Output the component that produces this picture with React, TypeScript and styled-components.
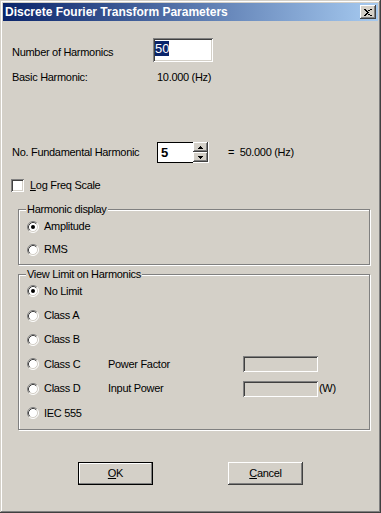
import React from 'react';
import styled, { createGlobalStyle } from 'styled-components';

const GlobalStyle = createGlobalStyle`
  html, body {
    margin: 0;
    padding: 0;
    background: #d4d0c8;
  }
  body {
    font-family: "Liberation Sans", Arial, sans-serif;
    font-size: 11px;
    letter-spacing: -0.3px;
    color: #000;
  }
`;

const Window = styled.div`
  width: 381px;
  height: 513px;
  box-sizing: border-box;
  padding: 3px;
  background: #d4d0c8;
  box-shadow: inset -1px -1px #404040, inset 1px 1px #d4d0c8, inset -2px -2px #808080,
    inset 2px 2px #ffffff;
  display: flex;
  flex-direction: column;
`;

const TitleBar = styled.div`
  height: 18px;
  flex-shrink: 0;
  display: flex;
  align-items: center;
  justify-content: space-between;
  padding: 0 2px;
  background: linear-gradient(to right, #0a246a, #a6caf0);
`;

const Title = styled.span`
  color: #fff;
  font-weight: bold;
  font-size: 12px;
  letter-spacing: 0;
  line-height: 14px;
`;

const CloseButton = styled.div`
  width: 16px;
  height: 14px;
  box-sizing: border-box;
  display: flex;
  align-items: center;
  justify-content: center;
  background: #d4d0c8;
  box-shadow: inset -1px -1px #404040, inset 1px 1px #ffffff, inset -2px -2px #808080;
`;

const Body = styled.div`
  display: flex;
  flex-direction: column;
  padding-left: 9px;
`;

const Row = styled.div<{ $mt: number; $h: number }>`
  display: flex;
  align-items: center;
  margin-top: ${(p) => p.$mt}px;
  height: ${(p) => p.$h}px;
  flex-shrink: 0;
`;

const Label = styled.span<{ $w?: number; $dy?: number; $ml?: number }>`
  line-height: 13px;
  white-space: pre;
  flex-shrink: 0;
  ${(p) => (p.$w ? `width: ${p.$w}px;` : '')}
  ${(p) => (p.$ml ? `margin-left: ${p.$ml}px;` : '')}
  ${(p) => (p.$dy ? `align-self: flex-start; padding-top: ${p.$dy}px;` : '')}
`;

const Edit = styled.div<{ $w: number; $h: number; $disabled?: boolean }>`
  width: ${(p) => p.$w}px;
  height: ${(p) => p.$h}px;
  box-sizing: border-box;
  flex-shrink: 0;
  padding: 4px 2px 0;
  background: ${(p) => (p.$disabled ? '#d4d0c8' : '#ffffff')};
  box-shadow: inset 1px 1px #808080, inset -1px -1px #ffffff, inset 2px 2px #404040,
    inset -2px -2px #d4d0c8;
  font-size: 13px;
  letter-spacing: 0;
  line-height: 13px;
`;

const Selected = styled.span`
  background: #0a246a;
  color: #fff;
`;

const SpinBox = styled.div`
  display: flex;
  height: 21px;
  width: 52px;
  flex-shrink: 0;
`;

const SpinEdit = styled.div`
  flex: 1;
  box-sizing: border-box;
  border: 1px solid #000;
  border-right: none;
  background: #fff;
  padding: 3px 0 0 3px;
  font-size: 13px;
  font-weight: bold;
  letter-spacing: 0;
  line-height: 14px;
`;

const SpinButtons = styled.div`
  width: 16px;
  box-sizing: border-box;
  display: flex;
  flex-direction: column;
  border-right: 1px solid #fff;
  border-bottom: 1px solid #fff;
`;

const SpinButton = styled.div`
  flex: 1;
  display: flex;
  align-items: center;
  justify-content: center;
  background: #d4d0c8;
  box-shadow: inset -1px -1px #404040, inset 1px 1px #ffffff, inset -2px -2px #808080;
`;

const CheckBox = styled.div`
  width: 13px;
  height: 13px;
  margin-left: -1px;
  flex-shrink: 0;
  background: #fff;
  box-shadow: inset 1px 1px #808080, inset -1px -1px #ffffff, inset 2px 2px #404040,
    inset -2px -2px #d4d0c8;
`;

const Group = styled.div<{ $mt: number; $h: number; $pt: number }>`
  position: relative;
  margin: ${(p) => p.$mt}px 0 0 6px;
  width: 352px;
  height: ${(p) => p.$h}px;
  box-sizing: border-box;
  flex-shrink: 0;
  border: 1px solid #808080;
  box-shadow: inset 1px 1px #ffffff, 1px 1px #ffffff;
  padding: ${(p) => p.$pt}px 0 0 8px;
  display: flex;
  flex-direction: column;
`;

const Legend = styled.span`
  position: absolute;
  top: -7px;
  left: 7px;
  padding: 0 1px;
  background: #d4d0c8;
  line-height: 13px;
  white-space: pre;
`;

const RadioRow = styled.div<{ $h: number }>`
  display: flex;
  align-items: center;
  height: ${(p) => p.$h}px;
  flex-shrink: 0;
`;

const RadioItem = styled.div<{ $w?: number }>`
  display: flex;
  align-items: center;
  gap: 5px;
  flex-shrink: 0;
  ${(p) => (p.$w ? `width: ${p.$w}px;` : '')}
`;

const ButtonRow = styled.div`
  display: flex;
  margin-top: 32px;
  height: 23px;
  padding-left: 66px;
  gap: 75px;
`;

const PushButton = styled.div<{ $default?: boolean }>`
  width: 75px;
  height: 23px;
  box-sizing: border-box;
  display: flex;
  align-items: center;
  justify-content: center;
  background: #d4d0c8;
  line-height: 13px;
  ${(p) =>
    p.$default
      ? `border: 1px solid #000; box-shadow: inset -1px -1px #808080, inset 1px 1px #ffffff;`
      : `box-shadow: inset -1px -1px #404040, inset 1px 1px #ffffff, inset -2px -2px #808080;`}
`;

const CloseGlyph = () => {
  const rows: [number, number][] = [
    [0, 6],
    [1, 4],
    [2, 2],
    [3, 3],
    [2, 2],
    [1, 4],
    [0, 6],
  ];
  return (
    <svg width="8" height="7" viewBox="0 0 8 7" shapeRendering="crispEdges">
      {rows.map(([a, b], i) =>
        b === 3 ? (
          <rect key={i} x={3} y={i} width={2} height={1} fill="#000" />
        ) : (
          <g key={i}>
            <rect x={a} y={i} width={2} height={1} fill="#000" />
            <rect x={b} y={i} width={2} height={1} fill="#000" />
          </g>
        )
      )}
    </svg>
  );
};

const Arrow = ({ up }: { up?: boolean }) => (
  <svg width="5" height="3" viewBox="0 0 5 3" shapeRendering="crispEdges">
    {up ? (
      <>
        <rect x={2} y={0} width={1} height={1} fill="#000" />
        <rect x={1} y={1} width={3} height={1} fill="#000" />
        <rect x={0} y={2} width={5} height={1} fill="#000" />
      </>
    ) : (
      <>
        <rect x={0} y={0} width={5} height={1} fill="#000" />
        <rect x={1} y={1} width={3} height={1} fill="#000" />
        <rect x={2} y={2} width={1} height={1} fill="#000" />
      </>
    )}
  </svg>
);

const Radio = ({ checked }: { checked?: boolean }) => (
  <svg width="12" height="12" viewBox="0 0 12 12" style={{ flexShrink: 0 }}>
    <circle cx="6" cy="6" r="5" fill="#fff" />
    <path d="M2.11 9.89 A5.5 5.5 0 0 1 9.89 2.11" stroke="#808080" fill="none" />
    <path d="M9.89 2.11 A5.5 5.5 0 0 1 2.11 9.89" stroke="#ffffff" fill="none" />
    <path d="M2.82 9.18 A4.5 4.5 0 0 1 9.18 2.82" stroke="#404040" fill="none" />
    <path d="M9.18 2.82 A4.5 4.5 0 0 1 2.82 9.18" stroke="#d4d0c8" fill="none" />
    {checked && <circle cx="6" cy="6" r="2" fill="#000" />}
  </svg>
);

const limits = ['No Limit', 'Class A', 'Class B', 'Class C', 'Class D', 'IEC 555'];

export default function App() {
  return (
    <>
      <GlobalStyle />
      <Window>
        <TitleBar>
          <Title>Discrete Fourier Transform Parameters</Title>
          <CloseButton>
            <CloseGlyph />
          </CloseButton>
        </TitleBar>
        <Body>
          <Row $mt={17} $h={24}>
            <Label $w={141} $dy={8}>
              Number of Harmonics
            </Label>
            <Edit $w={60} $h={24}>
              <Selected>50</Selected>
            </Edit>
          </Row>
          <Row $mt={9} $h={13}>
            <Label $w={145}>Basic Harmonic:</Label>
            <Label>10.000 (Hz)</Label>
          </Row>
          <Row $mt={58} $h={21}>
            <Label $w={145}>No. Fundamental Harmonic</Label>
            <SpinBox>
              <SpinEdit>5</SpinEdit>
              <SpinButtons>
                <SpinButton>
                  <Arrow up />
                </SpinButton>
                <SpinButton>
                  <Arrow />
                </SpinButton>
              </SpinButtons>
            </SpinBox>
            <Label $ml={19}>{'=  50.000 (Hz)'}</Label>
          </Row>
          <Row $mt={16} $h={13}>
            <CheckBox />
            <Label $ml={6}>
              <u>L</u>og Freq Scale
            </Label>
          </Row>
          <Group $mt={17} $h={56} $pt={5}>
            <Legend>Harmonic display</Legend>
            <RadioRow $h={23}>
              <RadioItem>
                <Radio checked />
                <Label>Amplitude</Label>
              </RadioItem>
            </RadioRow>
            <RadioRow $h={23}>
              <RadioItem>
                <Radio />
                <Label>RMS</Label>
              </RadioItem>
            </RadioRow>
          </Group>
          <Group $mt={9} $h={156} $pt={4}>
            <Legend>View Limit on Harmonics</Legend>
            {limits.map((name, i) => (
              <RadioRow key={name} $h={24.4}>
                <RadioItem $w={81}>
                  <Radio checked={i === 0} />
                  <Label>{name}</Label>
                </RadioItem>
                {name === 'Class C' && (
                  <>
                    <Label $w={135}>Power Factor</Label>
                    <Edit $w={75} $h={16} $disabled />
                  </>
                )}
                {name === 'Class D' && (
                  <>
                    <Label $w={135}>Input Power</Label>
                    <Edit $w={75} $h={16} $disabled />
                    <Label $ml={1}>(W)</Label>
                  </>
                )}
              </RadioRow>
            ))}
          </Group>
          <ButtonRow>
            <PushButton $default>
              <span>
                <u>O</u>K
              </span>
            </PushButton>
            <PushButton>
              <span>
                <u>C</u>ancel
              </span>
            </PushButton>
          </ButtonRow>
        </Body>
      </Window>
    </>
  );
}
